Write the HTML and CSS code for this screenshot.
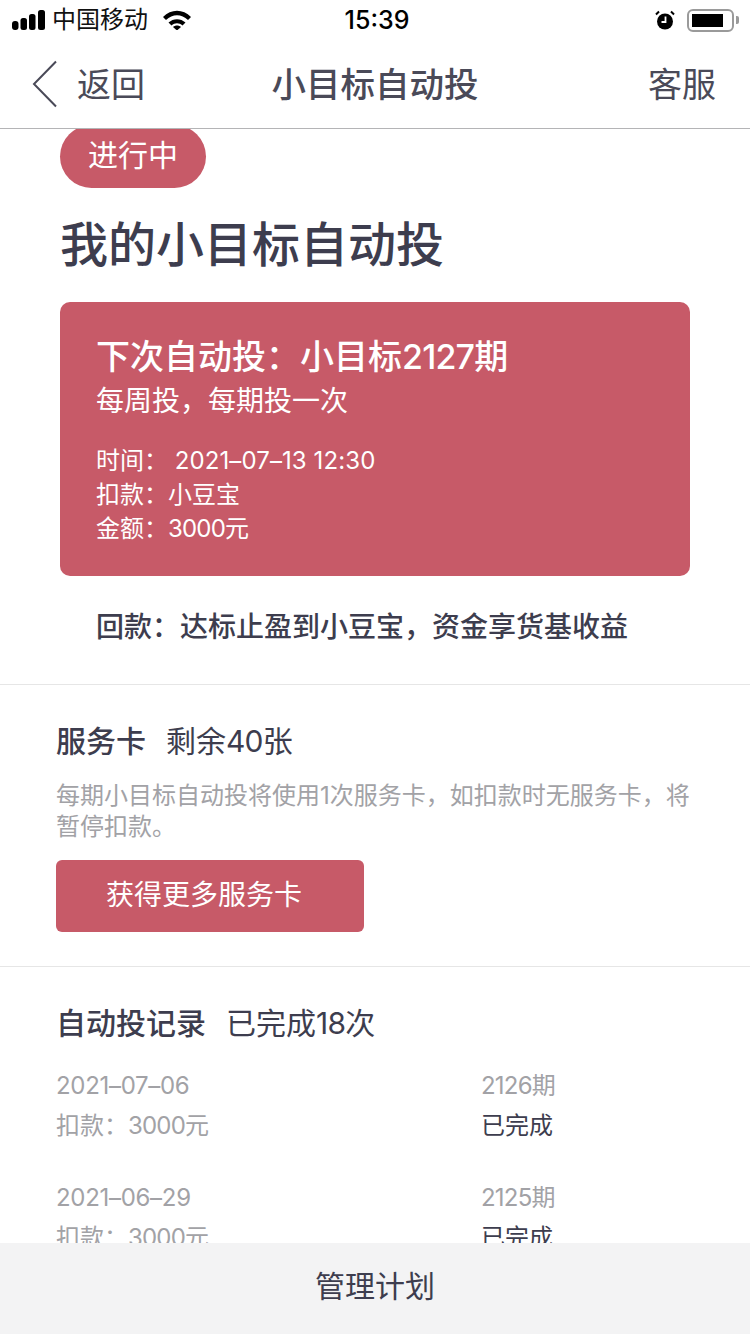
FILE: index.html
```
<!DOCTYPE html>
<html lang="zh-CN">
<head>
<meta charset="utf-8">
<title>小目标自动投</title>
<link rel="stylesheet" href="styles.css">
</head>
<body>
<div class="app">
  <div class="status">
    <div class="status-side">
      <svg class="signal" width="33" height="20" viewBox="0 0 33 20"><rect x="0" y="11" width="6.500" height="9" rx="3"/><rect x="8.500" y="8" width="6.500" height="12" rx="2.500"/><rect x="17" y="4" width="6.500" height="16" rx="2.500"/><rect x="26" y="0" width="7" height="20" rx="2.500"/></svg>
      <span class="carrier">中国移动</span>
      <svg class="wifi" width="28" height="20" viewBox="0 0 28 20"><path d="M0 7C8 -1.500 20 -1.500 28 7l-3 3C18.500 3.500 9.500 3.500 3 10z"/><path d="M5.500 12.500c4.800-4.500 12.200-4.500 17 0l-3 3c-3.300-3-7.700-3-11 0z"/><path d="M10 17c2.300-2 5.700-2 8 0l-4 3.500z"/></svg>
    </div>
    <div class="time">15:39</div>
    <div class="status-side status-right">
      <svg width="20" height="20" viewBox="0 0 20 20"><circle cx="10" cy="11.500" r="8" fill="#000"/><path d="M10.500 6.500v5.500H6.500" fill="none" stroke="#fff" stroke-width="1.800"/><path d="M1 4.500l3-3M19 4.500l-3-3" stroke="#000" stroke-width="2" fill="none"/></svg>
      <div class="battery"><div class="battery-fill"></div></div>
      <div class="battery-cap"></div>
    </div>
  </div>
  <header class="nav">
    <div class="nav-left">
      <svg width="26" height="48" viewBox="0 0 26 48"><path d="M24 1.500L2 24l22 22.500" fill="none" stroke="#4a4a58" stroke-width="2"/></svg>
      <span class="nav-text">返回</span>
    </div>
    <div class="nav-title nav-text">小目标自动投</div>
    <div class="nav-text">客服</div>
  </header>
  <main class="scroll">
    <section class="plan">
      <span class="pill">进行中</span>
      <h1 class="plan-title">我的小目标自动投</h1>
      <div class="card">
        <div class="card-title">下次自动投：小目标<span class="num">2127</span>期</div>
        <div class="card-sub">每周投，每期投一次</div>
        <div class="card-details">
          <div>时间：&nbsp;<span class="datetime">2021–07–13 12:30</span></div>
          <div>扣款：小豆宝</div>
          <div>金额：<span class="num">3000</span>元</div>
        </div>
      </div>
      <div class="refund">回款：达标止盈到小豆宝，资金享货基收益</div>
    </section>
    <section class="service">
      <div class="section-head"><strong>服务卡</strong><span>剩余<span class="num">40</span>张</span></div>
      <p class="note">每期小目标自动投将使用1次服务卡，如扣款时无服务卡，将暂停扣款。</p>
      <button class="action">获得更多服务卡</button>
    </section>
    <section class="records">
      <div class="section-head"><strong>自动投记录</strong><span>已完成<span class="num">18</span>次</span></div>
      <div class="record">
        <div class="record-col">
          <div class="date">2021–07–06</div>
          <div>扣款：<span class="num">3000</span>元</div>
        </div>
        <div class="record-col">
          <div><span class="num">2126</span>期</div>
          <div class="done">已完成</div>
        </div>
      </div>
      <div class="record">
        <div class="record-col">
          <div class="date">2021–06–29</div>
          <div>扣款：<span class="num">3000</span>元</div>
        </div>
        <div class="record-col">
          <div><span class="num">2125</span>期</div>
          <div class="done">已完成</div>
        </div>
      </div>
    </section>
  </main>
  <footer class="footer">管理计划</footer>
</div>
</body>
</html>
```
FILE: styles.css
```
* { box-sizing: border-box; }
html, body { margin: 0; padding: 0; }
body {
  font-family: "Inter", "Noto Sans CJK SC", sans-serif;
  color: #3d3d4e;
  background: #fff;
}
.app {
  width: 750px;
  height: 1334px;
  display: flex;
  flex-direction: column;
  overflow: hidden;
}
.status {
  height: 40px;
  flex: none;
  display: flex;
  align-items: center;
  justify-content: space-between;
  padding: 0 11px 0 12px;
  color: #000;
}
.status-side { display: flex; align-items: center; width: 260px; }
.status-right { justify-content: flex-end; }
.signal { margin-right: 7px; }
.carrier { font-size: 24px; line-height: 40px; color: #111; }
.wifi { margin-left: 15px; }
.time { font-size: 25px; font-weight: 500; line-height: 40px; padding-left: 3px; }
.status-right svg { margin-right: 12px; }
.battery {
  width: 47px;
  height: 23px;
  border: 2px solid #9a9a9a;
  border-radius: 6px;
  padding: 3px;
}
.battery-fill { width: 31px; height: 100%; background: #000; }
.battery-cap { width: 3px; height: 8px; background: #9a9a9a; margin-left: 2px; border-radius: 0 2px 2px 0; }
.nav {
  height: 89px;
  flex: none;
  display: flex;
  align-items: center;
  justify-content: space-between;
  padding: 0 34px 0 32px;
  border-bottom: 1px solid #b4b4b6;
  font-size: 34px;
  color: #4a4a58;
  position: relative;
}
.nav-left { display: flex; align-items: center; gap: 19px; }
.nav-text { margin-bottom: 4px; }
.nav-title {
  position: absolute;
  left: 0;
  right: 0;
  text-align: center;
  font-size: 34.5px;
  font-weight: 500;
  pointer-events: none;
}
.scroll { flex: 1; min-height: 0; overflow: hidden; }
.plan {
  margin-top: -4px;
  padding: 0 60px 36px;
  border-bottom: 1px solid #e6e6e6;
}
.pill {
  display: block;
  width: 146px;
  height: 63px;
  border-radius: 32px;
  background: #c75a68;
  color: #fff;
  font-size: 30px;
  line-height: 60px;
  text-align: center;
}
.plan-title {
  margin: 21px 0 0;
  font-size: 48px;
  line-height: 72px;
  font-weight: 500;
}
.card {
  margin-top: 21px;
  height: 274px;
  background: #c75a68;
  border-radius: 10px;
  padding: 32px 36px 0;
  color: #fff;
}
.card-title { font-size: 34px; line-height: 46px; font-weight: 500; }
.card-sub { font-size: 28px; line-height: 42px; }
.card-details { margin-top: 22px; font-size: 24px; line-height: 34px; }
.num { letter-spacing: -0.8px; }
.date { letter-spacing: -0.3px; }
.datetime { letter-spacing: 0.1px; }
.refund {
  margin-top: 30px;
  padding-left: 36px;
  font-size: 28px;
  line-height: 42px;
  font-weight: 500;
}
.service {
  padding: 34px 56px 34px;
  border-bottom: 1px solid #e6e6e6;
}
.section-head { display: flex; gap: 20px; font-size: 30px; line-height: 44px; }
.section-head strong { font-weight: 500; }
.note {
  margin: 17px 0 0;
  font-size: 24px;
  line-height: 31px;
  color: #a2a2a6;
  width: 640px;
}
.action {
  display: block;
  margin-top: 18px;
  width: 308px;
  height: 72px;
  border: 0;
  border-radius: 6px;
  background: #c75a68;
  color: #fff;
  font: inherit;
  font-size: 28px;
  padding: 0 12px 7px 0;
}
.records { padding: 34px 56px 0; }
.records .section-head { margin-bottom: 21px; }
.record {
  display: grid;
  grid-template-columns: 425px 1fr;
  font-size: 24px;
  line-height: 40px;
  color: #a2a2a6;
  padding-bottom: 32px;
}
.done { color: #3d3d4e; }
.footer {
  height: 91px;
  flex: none;
  background: #f3f3f4;
  font-size: 30px;
  line-height: 87px;
  text-align: center;
}
```
